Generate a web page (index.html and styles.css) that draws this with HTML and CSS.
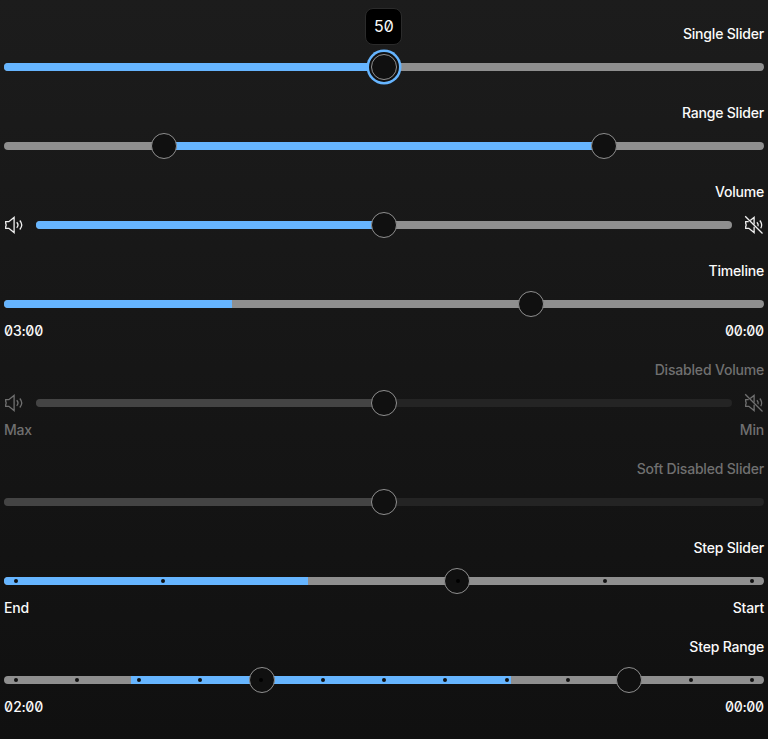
FILE: index.html
```
<!DOCTYPE html>
<html lang="en">
<head>
<meta charset="utf-8">
<title>Sliders</title>
<link rel="stylesheet" href="styles.css">
</head>
<body>
<svg class="defs" aria-hidden="true">
  <symbol id="speaker" viewBox="0 0 20 20">
    <path d="M1.700 6.700h3.100l5.300-4.300v15.200l-5.300-4.300H1.700V11.700l.5-1.700-.5-1.700z"/>
    <path d="M12.700 7.200q2.600 2.800 0 5.600M15.800 5.500q3.900 4.500 0 9"/>
  </symbol>
  <symbol id="muted" viewBox="0 0 20 20">
    <path d="M6.200 5.600l3.900-3.200v7.200M10.100 11.700v5.900l-5.300-4.300H1.700V11.700l.5-1.700-.5-1.700V6.700h3"/>
    <path d="M1.200 1.200l17.300 17.300M12.900 7.200q1.900 2 1.100 4M15.800 5.500q3.200 3.900 1 7.800"/>
  </symbol>
</svg>
<main class="sliders">
  <section class="slider">
    <div class="label">Single Slider</div>
    <div class="row"><div class="track"><div class="fill start" style="left:0;width:380px"></div><div class="thumb focused" style="left:380px"><span class="tooltip">50</span></div></div></div>
  </section>
  <section class="slider">
    <div class="label">Range Slider</div>
    <div class="row"><div class="track"><div class="fill" style="left:160px;width:440px"></div><div class="thumb" style="left:160px"></div><div class="thumb" style="left:600px"></div></div></div>
  </section>
  <section class="slider">
    <div class="label">Volume</div>
    <div class="row"><svg class="icon"><use href="#speaker"/></svg><div class="track"><div class="fill start" style="left:0;width:348px"></div><div class="thumb" style="left:348px"></div></div><svg class="icon"><use href="#muted"/></svg></div>
  </section>
  <section class="slider">
    <div class="label">Timeline</div>
    <div class="row"><div class="track"><div class="fill start" style="left:0;width:228px"></div><div class="thumb" style="left:527px"></div></div></div>
    <div class="marks numeric"><span>03:00</span><span>00:00</span></div>
  </section>
  <section class="slider disabled">
    <div class="label">Disabled Volume</div>
    <div class="row"><svg class="icon"><use href="#speaker"/></svg><div class="track"><div class="fill start" style="left:0;width:348px"></div><div class="thumb" style="left:348px"></div></div><svg class="icon"><use href="#muted"/></svg></div>
    <div class="marks"><span>Max</span><span>Min</span></div>
  </section>
  <section class="slider disabled">
    <div class="label">Soft Disabled Slider</div>
    <div class="row"><div class="track"><div class="fill start" style="left:0;width:380px"></div><div class="thumb" style="left:380px"></div></div></div>
  </section>
  <section class="slider">
    <div class="label">Step Slider</div>
    <div class="row"><div class="track"><div class="fill start" style="left:0;width:304px"></div><div class="thumb" style="left:453px"></div>
      <i class="step" style="left:12px"></i><i class="step" style="left:159px"></i><i class="step over" style="left:454px"></i><i class="step" style="left:601px"></i><i class="step" style="left:748px"></i></div></div>
    <div class="marks"><span>End</span><span>Start</span></div>
  </section>
  <section class="slider">
    <div class="label">Step Range</div>
    <div class="row"><div class="track"><div class="fill" style="left:127px;width:380px"></div><div class="thumb" style="left:258px"></div><div class="thumb" style="left:625px"></div>
      <i class="step" style="left:12px"></i><i class="step" style="left:73px"></i><i class="step" style="left:135px"></i><i class="step" style="left:196px"></i><i class="step over" style="left:257px"></i><i class="step" style="left:319px"></i><i class="step" style="left:380px"></i><i class="step" style="left:441px"></i><i class="step" style="left:503px"></i><i class="step" style="left:564px"></i><i class="step" style="left:687px"></i><i class="step" style="left:748px"></i></div></div>
    <div class="marks numeric"><span>02:00</span><span>00:00</span></div>
  </section>
</main>
</body>
</html>
```
FILE: styles.css
```
* { box-sizing: border-box; }
html { height: 100%; background: #101010; }
body {
  margin: 0;
  height: 739px;
  overflow: hidden;
  background: linear-gradient(#1c1c1c, #101010);
  color: #fafafa;
  font: 500 14px/20px Inter, sans-serif;
  letter-spacing: -0.19px;
}
.defs { position: absolute; width: 0; height: 0; }
.sliders {
  display: flex;
  flex-direction: column;
  gap: 19px;
  padding: 24px 4px 0;
}
.label { text-align: right; }
.row {
  display: flex;
  align-items: center;
  gap: 12px;
  height: 26px;
  margin: 10px 0 4px;
}
.track {
  position: relative;
  flex: 1;
  height: 8px;
  border-radius: 4px;
  background: #8f8f8f;
}
.fill { position: absolute; top: 0; height: 8px; background: #66b5ff; }
.fill.start { border-radius: 4px 0 0 4px; }
.thumb {
  position: absolute;
  top: -9px;
  width: 26px;
  height: 26px;
  margin-left: -13px;
  border: 1px solid #8f8f8f;
  border-radius: 50%;
  background: #101010;
}
.focused { box-shadow: 0 0 0 2px #101010, 0 0 0 4.5px #66b5ff; }
.tooltip {
  position: absolute;
  left: -7px;
  top: -47px;
  width: 37px;
  height: 37px;
  border: 1px solid #2b2b2b;
  border-radius: 8px;
  background: #000;
  font-size: 16px;
  font-weight: 400;
  line-height: 35px;
  text-align: center;
  letter-spacing: -0.5px;
  font-feature-settings: "tnum", "zero";
}
.icon {
  width: 20px;
  height: 20px;
  fill: none;
  stroke: #f0f0f0;
  stroke-width: 1.3;
}
.marks { display: flex; justify-content: space-between; }
.numeric { font-feature-settings: "tnum", "zero"; }
.step {
  position: absolute;
  top: 2px;
  width: 4px;
  height: 4px;
  margin-left: -2px;
  border-radius: 50%;
  background: #101010;
}
.step.over { background: #000; }
.disabled { color: #707070; }
.disabled .icon { stroke: #707070; }
.disabled .track { background: #242424; }
.disabled .fill { background: #444; }
```
